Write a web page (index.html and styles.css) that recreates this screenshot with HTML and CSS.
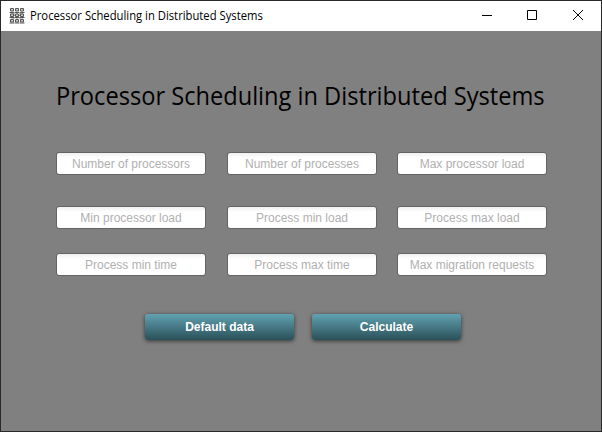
FILE: index.html
```html
<!DOCTYPE html>
<html lang="en">
<head>
<meta charset="utf-8">
<title>Processor Scheduling in Distributed Systems</title>
<link rel="stylesheet" href="styles.css">
</head>
<body>
<div class="window">
  <header class="titlebar">
    <svg class="app-icon" width="16" height="16" viewBox="0 0 16 16" fill="none" stroke="#555">
      <path stroke="#999" d="M3 4v8M8 4v8M13 4v8M3 7.500h10M3 4l10 8M13 4L3 12"/>
      <path fill="#ccc" d="M1.500.5h3v2.500h-3zM6.500.5h3v2.500h-3zM11.500.5h3v2.500h-3zM1.500 6h3v2.500h-3zM6.500 6h3v2.500h-3zM11.500 6h3v2.500h-3zM1.500 11.500h3v2.500h-3zM6.500 11.500h3v2.500h-3zM11.500 11.500h3v2.500h-3z"/>
      <path d="M.5 4.500h4.500M5.500 4.500h5M11 4.500h4.500M.5 9.500h4.500M5.500 9.500h5M11 9.500h4.500M.5 15h4.500M5.500 15h5M11 15h4.500"/>
    </svg>
    <span class="caption">Processor Scheduling in Distributed Systems</span>
    <div class="controls">
      <svg width="45" height="30" viewBox="0 0 45 30"><path d="M17 14.500h10"/></svg>
      <svg width="45" height="30" viewBox="0 0 45 30"><path d="M17.500 9.500h9v9h-9z"/></svg>
      <svg width="45" height="30" viewBox="0 0 45 30"><path d="M18 9l10 10M28 9l-10 10"/></svg>
    </div>
  </header>
  <main class="content">
    <h1 class="heading">Processor Scheduling in Distributed Systems</h1>
    <form class="form">
      <div class="fields">
        <input class="field" placeholder="Number of processors">
        <input class="field" placeholder="Number of processes">
        <input class="field" placeholder="Max processor load">
        <input class="field" placeholder="Min processor load">
        <input class="field" placeholder="Process min load">
        <input class="field" placeholder="Process max load">
        <input class="field" placeholder="Process min time">
        <input class="field" placeholder="Process max time">
        <input class="field" placeholder="Max migration requests">
      </div>
      <div class="actions">
        <button class="button" type="button">Default data</button>
        <button class="button" type="button">Calculate</button>
      </div>
    </form>
  </main>
</div>
</body>
</html>
```
FILE: styles.css
```css
* { box-sizing: border-box; }

body {
  margin: 0;
  background: #808080;
  color: #000;
}

.window {
  display: flex;
  flex-direction: column;
  width: 602px;
  height: 432px;
  border: 1px solid #29292c;
  background: #808080;
  overflow: hidden;
}

.titlebar {
  display: flex;
  align-items: center;
  height: 30px;
  padding: 0 1px 0 8px;
  background: #fff;
}

.app-icon { flex: none; }

.caption {
  margin-left: 5px;
  font: 12px/16px "Open Sans", "Noto Sans", sans-serif;
  white-space: nowrap;
  transform: scaleX(0.938);
  transform-origin: 0 50%;
}

.controls {
  display: flex;
  margin-left: auto;
}

.controls svg {
  fill: none;
  stroke: #000;
  stroke-width: 1;
}

.content {
  flex: 1;
  padding: 44px 54px 0 55px;
}

.heading {
  margin: 0;
  width: max-content;
  font: 400 25px/40px "Open Sans", "Noto Sans", sans-serif;
  white-space: nowrap;
  transform: scaleX(0.945);
  transform-origin: 0 50%;
}

.fields {
  display: grid;
  grid-template-columns: 171px 170px 150px;
  grid-template-rows: 54px 47px 23px;
  margin-top: 37px;
}

.field {
  width: 150px;
  height: 23px;
  margin: 0;
  padding: 0;
  border: 1px solid #646464;
  border-radius: 3px;
  background: linear-gradient(#f0f0f0, #fff 5px);
  font: 12px/15px "Liberation Sans", Arial, sans-serif;
  text-align: center;
}

.field::placeholder {
  color: #b0b0b0;
  opacity: 1;
}

.actions {
  display: flex;
  gap: 18px;
  margin: 38px 0 0 89px;
}

.button {
  width: 149px;
  height: 26px;
  padding: 0;
  border: 0;
  border-radius: 3px;
  background: linear-gradient(#61a2b1, #2a5058);
  box-shadow: 0 1px 4px rgba(0, 0, 0, 0.6);
  color: #fff;
  font: bold 12px/15px "Liberation Sans", Arial, sans-serif;
}
```
